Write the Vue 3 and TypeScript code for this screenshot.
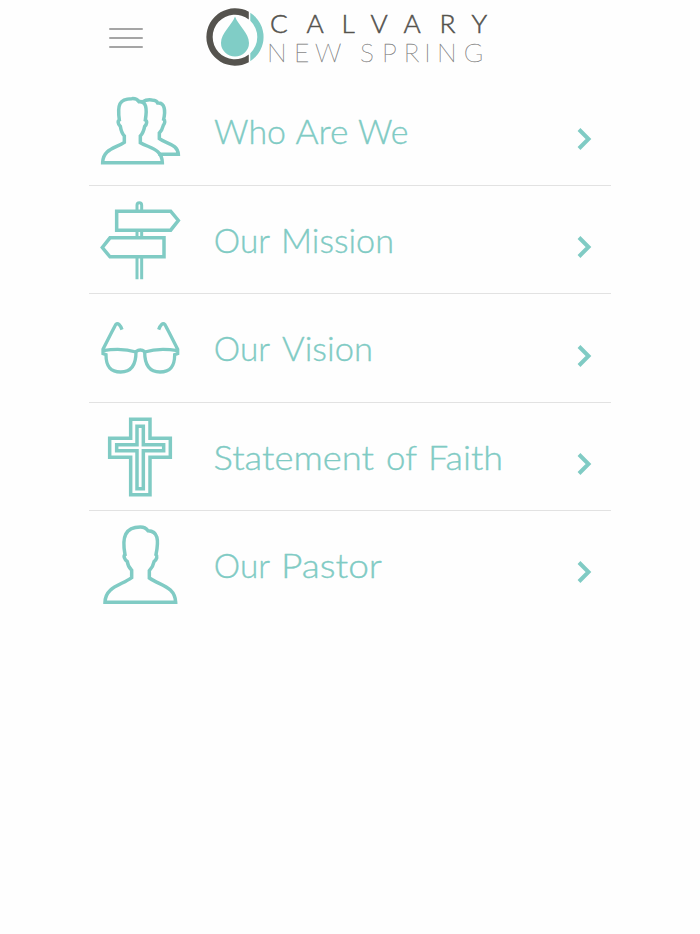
<script setup lang="ts">
interface Shape {
  d: string
  width?: number
}
interface Word {
  text: string
  x: number
  w: number
}
interface Item {
  words: Word[]
  viewBox: string
  shapes: Shape[]
}

const items: Item[] = [
  {
    words: [
      { text: 'Who', x: 0, w: 72 },
      { text: 'Are', x: 81.5, w: 53 },
      { text: 'We', x: 144, w: 50.5 },
    ],
    viewBox: '-3 -24 312 324',
    shapes: [
      { d: 'M38 233 C39 192 76 190 103 172 L103 153 C96 146 93 137 91 124 C83 117 83 107 88 105 C82 61 87 41 125 41 C136 40 143 44 147 50 C168 48 172 69 166 105 C172 108 171 118 164 124 C161 139 157 147 151 153 L151 173 C180 190 216 191 217 233 Z' },
      { d: 'M158 50 C168 44 182 44 191 46 Q200 47 203 54 C224 52 227 76 221 103 C226 106 225 115 220 121 C217 133 214 138 208 144 L208 161 C230 178 263 176 265 208 L205 208' },
    ],
  },
  {
    words: [
      { text: 'Our', x: -0.2, w: 56.2 },
      { text: 'Mission', x: 67, w: 113 },
    ],
    viewBox: '-3 -13.5 312 324',
    shapes: [
      { d: 'M80 62 H242 L265 90 L242 119 H80 Z' },
      { d: 'M222 142 H60 L37 171 L60 199 H222 Z' },
      { d: 'M141 60 V44 Q141 37 148 37 Q155 37 155 44 V60 M141 120 V142 M155 120 V142 M141 200 V266 M155 200 V266', width: 9 },
    ],
  },
  {
    words: [
      { text: 'Our', x: -0.2, w: 56.2 },
      { text: 'Vision', x: 68, w: 91 },
    ],
    viewBox: '-3 -33 312 324',
    shapes: [
      { d: 'M96 74 C91 60 84 52 77 59 Q75 62 39 133 L39 146 L48 149 C48 183 60 201 92 201 C123 201 138 182 138 141 C109 132 70 132 39 137 M206 74 C211 60 218 52 225 59 Q227 62 263 133 L263 146 L254 149 C254 183 242 201 210 201 C179 201 164 182 164 141 C193 132 232 132 263 137 M138 140 Q151 130 164 140', width: 10 },
    ],
  },
  {
    words: [
      { text: 'Statement', x: -0.5, w: 160.5 },
      { text: 'of', x: 172, w: 31 },
      { text: 'Faith', x: 214, w: 75 },
    ],
    viewBox: '-3 -7.5 312 324',
    shapes: [
      { d: 'M122 41 H180 V98 H241 V155 H180 V268 H122 V155 H59 V98 H122 Z' },
      { d: 'M141 62 H160 V118 H221 V136 H160 V250 H141 V136 H80 V118 H141 Z' },
    ],
  },
  {
    words: [
      { text: 'Our', x: -0.2, w: 56.2 },
      { text: 'Pastor', x: 67, w: 101 },
    ],
    viewBox: '-3 -12 312 324',
    shapes: [
      { d: 'M45 262 C46 215 94 211 125 188 L125 166 C117 158 113 151 112 140 C102 132 100 122 105 119 C95 65 106 36 151 36 C163 36 169 40 174 47 C204 48 207 74 198 119 C203 123 201 133 192 140 C190 152 185 159 178 167 L178 189 C211 212 255 214 257 262 Z' },
    ],
  },
]
</script>

<template>
  <main class="screen">
    <header class="header">
      <button class="menu" aria-label="Menu"><i></i><i></i><i></i></button>
      <svg class="logo" viewBox="0 0 300 77" role="img">
        <path d="M48.8 11.8 A28.7 28.7 0 1 0 48.8 62.2 V54.5 A22.3 22.3 0 1 1 48.8 19.5 Z" fill="#55534e" />
        <path d="M50.3 12.8 A28.7 28.7 0 0 1 50.3 61.2 V53.2 A22.3 22.3 0 0 0 50.3 20.8 Z" fill="#80cdc6" />
        <path d="M35 16.5 C38 25 49 33 49 43 A14 13.4 0 0 1 21 43 C21 33 32 25 35 16.5 Z" fill="#80cdc6" />
        <text class="brand" y="33.4" x="70 106.5 141.5 170.5 203.5 239.5 271.5">CALVARY</text>
        <text class="sub" y="61.5" x="67 94 115 151 160 182 203.8 224.3 237 263.8">NEW SPRING</text>
      </svg>
    </header>
    <nav class="list">
      <a v-for="(item, i) in items" :key="i" class="row">
        <svg class="icon" :viewBox="item.viewBox">
          <path v-for="(s, n) in item.shapes" :key="n" :d="s.d" :stroke-width="s.width ?? 10.5" />
        </svg>
        <svg class="label" viewBox="0 0 340 108">
          <text
            v-for="word in item.words"
            :key="word.text"
            :x="word.x"
            y="66.6"
            :textLength="word.w"
            lengthAdjust="spacingAndGlyphs"
          >{{ word.text }}</text>
        </svg>
        <svg class="chevron" viewBox="0 0 16 24">
          <path d="M3 2.5 L12.5 12 L3 21.5" />
        </svg>
      </a>
    </nav>
  </main>
</template>

<style>
body {
  background: #fefefe;
}
</style>

<style scoped>
.screen {
  box-sizing: border-box;
  min-height: 934px;
  padding: 0 89px;
  background: #fefefe;
  font-family: Lato, sans-serif;
}
.header {
  display: flex;
  height: 77.4px;
}
.menu {
  display: flex;
  flex-direction: column;
  gap: 7.2px;
  width: 34px;
  margin: 28px 0 0 20px;
  padding: 0;
  border: 0;
  background: none;
}
.menu i {
  height: 2px;
  border-radius: 1px;
  background: #a5a5a5;
}
.logo {
  width: 300px;
  height: 77px;
  margin-left: 57px;
}
.brand {
  font-size: 26.3px;
  font-weight: 300;
  fill: #55534e;
  stroke: #55534e;
  stroke-width: 0.5;
}
.sub {
  font-size: 26.3px;
  font-weight: 100;
  fill: #858585;
  stroke: #858585;
  stroke-width: 0.35;
}
.row {
  display: flex;
  box-sizing: border-box;
  width: 522px;
  height: 108.4px;
  border-bottom: 1px solid #e2e2e2;
}
.row:last-child {
  border-bottom: 0;
}
.icon {
  width: 104px;
  height: 108px;
  margin-right: 21px;
  fill: none;
  stroke: #80cbc4;
  stroke-linejoin: miter;
  flex: none;
}
.label {
  width: 340px;
  height: 108px;
  flex: none;
  overflow: visible;
  fill: #80cbc4;
  stroke: #80cbc4;
  stroke-width: 0.35;
  stroke-linejoin: round;
  font-size: 33.5px;
  font-weight: 300;
}
.chevron {
  width: 16px;
  height: 24px;
  margin: 49.5px 0 0 21.7px;
  fill: none;
  stroke: #80cbc4;
  stroke-width: 4;
}
</style>
